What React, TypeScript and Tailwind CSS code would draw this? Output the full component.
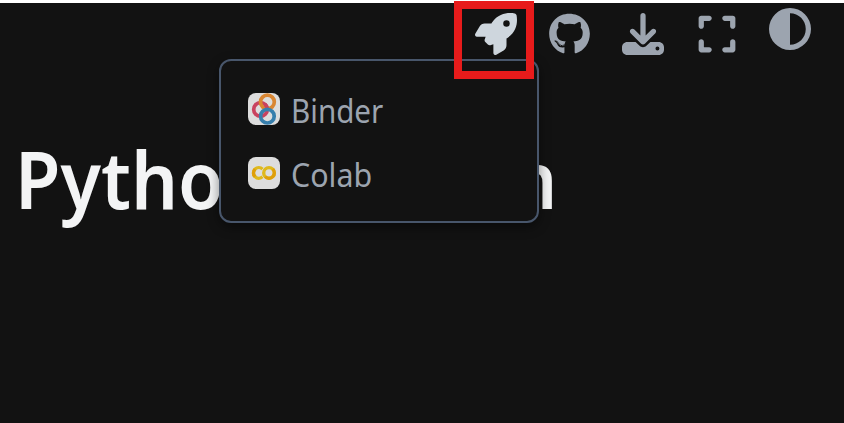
import React from "react";
import { FaRocket, FaGithub, FaDownload, FaExpand, FaCircleHalfStroke } from "react-icons/fa6";

function BinderLogo() {
  return (
    <svg className="size-8 shrink-0 rounded-lg bg-[#dddddd]" viewBox="0 0 32 32" fill="none" strokeWidth="3.7">
      <circle cx="12.5" cy="16.4" r="6.8" stroke="#c9425f" />
      <circle cx="19.4" cy="9" r="6.9" stroke="#d98632" />
      <path d="M17 11.3A6.8 6.8 0 0 1 19.2 17" stroke="#c9425f" />
      <circle cx="19.4" cy="23.2" r="6.8" stroke="#377fad" />
    </svg>
  );
}

function ColabLogo() {
  return (
    <svg className="size-8 shrink-0 rounded-lg bg-[#dddddd]" viewBox="0 0 32 32" fill="none" strokeWidth="3.4">
      <path d="M14.55 12.15A5.3 5.3 0 1 0 14.55 19.65" stroke="#dfb91d" />
      <path d="M7.05 12.15A5.3 5.3 0 0 0 7.05 19.65" stroke="#df9f09" />
      <circle cx="21" cy="15.9" r="7.4" fill="#dddddd" />
      <circle cx="21" cy="15.9" r="5.3" stroke="#dfb91d" />
      <path d="M24.75 12.15A5.3 5.3 0 0 1 17.25 19.65" stroke="#df9f09" />
    </svg>
  );
}

export default function App() {
  return (
    <div className="relative h-[423px] w-[844px] overflow-hidden bg-[#121212] font-['Noto_Sans','Open_Sans',sans-serif]">
      <div className="h-[3px] bg-white" />
      <header className="flex h-[76px] items-start pl-[454px] text-[42px] text-[#9ca4af]">
        <div className="flex w-20 justify-center pt-[10px] pl-1">
          <FaRocket className="text-[#ced6dd]" />
        </div>
        <FaGithub className="mt-[10px] ml-[15px] w-[41px]" />
        <FaDownload className="mt-[10px] ml-8" />
        <FaExpand className="mt-[10px] ml-[31.5px]" />
        <FaCircleHalfStroke className="mt-[5px] ml-[31.5px]" />
      </header>
      <h1 className="mt-[46px] flex w-[560px] justify-between pr-[3px] pl-[15px] text-[79px] leading-[108px] font-semibold text-[#f3f4f5]">
        <span className="origin-left scale-x-[0.935]">Pytho</span>
        <span className="origin-right scale-x-[0.935]">n</span>
      </h1>
      <div className="absolute top-[59px] left-[219px] flex h-[164px] w-80 flex-col gap-8 rounded-xl border-2 border-[#48566b] bg-[#121212] pt-8 pl-[27px] text-[32px] leading-8 text-[#9ca4af] shadow-[0_4px_12px_rgba(0,0,0,0.45)]">
        <div className="flex h-8 items-center gap-[11px]">
          <BinderLogo />
          <span className="mt-1 origin-left scale-x-[0.925]">Binder</span>
        </div>
        <div className="flex h-8 items-center gap-[11px]">
          <ColabLogo />
          <span className="mt-1 origin-left scale-x-[0.95]">Colab</span>
        </div>
      </div>
      <div className="absolute top-px left-[454px] h-[78px] w-20 border-8 border-[#e71b1b]" />
    </div>
  );
}
